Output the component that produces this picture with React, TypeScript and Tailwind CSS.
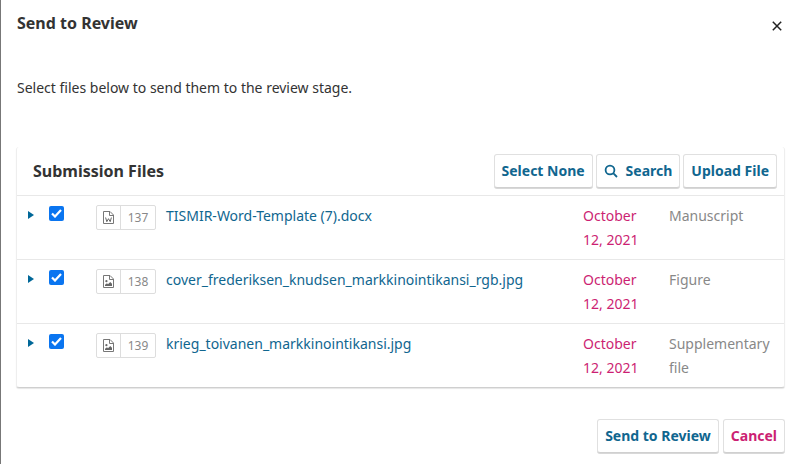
const files = [
  { id: 137, name: 'TISMIR-Word-Template (7).docx', type: ['Manuscript'], icon: 'word' },
  { id: 138, name: 'cover_frederiksen_knudsen_markkinointikansi_rgb.jpg', type: ['Figure'], icon: 'image' },
  { id: 139, name: 'krieg_toivanen_markkinointikansi.jpg', type: ['Supplementary', 'file'], icon: 'image' },
];

function FileIcon({ kind }: { kind: string }) {
  return (
    <svg width="11" height="13" viewBox="0 0 11 13" fill="none" className="block">
      <path d="M.5 .5h6.5l3.5 3.5v8.5H.5z" stroke="#777" fill="#fff" />
      <path d="M6.5 .5v4h4" stroke="#777" />
      {kind === 'word' ? (
        <path d="M2.6 6.5l1.2 4.2 1.7-3 1.7 3 1.2-4.2" stroke="#666" strokeWidth="1" />
      ) : (
        <>
          <circle cx="3.4" cy="6.2" r="1.1" fill="#666" />
          <path d="M2 11V9.8l2-1.6 1 1 2.2-2.2L9 8.8V11z" fill="#666" />
        </>
      )}
    </svg>
  );
}

function Btn({ children, danger, className = '' }: { children: React.ReactNode; danger?: boolean; className?: string }) {
  return (
    <button
      className={`h-[34px] px-[7px] pb-[2px] flex items-center justify-center bg-white border border-[#e0e0e0] border-b-[#d0d0d0] rounded-[3px] shadow-[0_1px_0_#d8d8d8] text-[14px] font-bold whitespace-nowrap ${danger ? 'text-[#cc1f73]' : 'text-[#10668f]'} ${className}`}
    >
      {children}
    </button>
  );
}

export default function App() {
  return (
    <div className="relative w-[797px] h-[464px] overflow-hidden bg-white text-[14px] text-[#333] font-['Noto_Sans',sans-serif] border-l border-[#777]">
      <div className="absolute left-0 top-0 w-px h-[31px] -ml-px bg-[#1c2b3a]" />
      <div className="flex items-start justify-between pl-4 pr-[15px] pt-[11px]">
        <h1 className="text-[16px] leading-6 font-bold">Send to Review</h1>
        <svg width="10" height="10" viewBox="0 0 10 10" className="mt-[10px]" stroke="#222" strokeWidth="1.5">
          <path d="M.8 .8l8.4 8.4M9.2 .8L.8 9.2" />
        </svg>
      </div>
      <p className="pl-4 mt-[43px] leading-5">Select files below to send them to the review stage.</p>

      <div className="ml-[15px] mt-[49px] w-[769px] bg-white border-x border-[#eeeeee] border-b border-b-[#cfcfcf] rounded-[3px] shadow-[0_1px_1px_rgba(0,0,0,0.1)]">
        <div className="h-[49px] flex items-center justify-between pl-[16px] pr-[7px] border-b border-[#e8e8e8]">
          <h2 className="text-[16px] font-bold">Submission Files</h2>
          <div className="flex gap-[3px]">
            <Btn className="w-[99px]">Select None</Btn>
            <Btn>
              <svg width="14" height="14" viewBox="0 0 14 14" fill="none" stroke="#10668f" strokeWidth="1.8" className="mr-[8px] mt-[2px]">
                <circle cx="6" cy="6" r="4.4" />
                <path d="M9.2 9.2l3.8 3.8" />
              </svg>
              Search
            </Btn>
            <Btn>Upload File</Btn>
          </div>
        </div>
        {files.map((f, i) => (
          <div
            key={f.id}
            className={`flex items-start ${i < files.length - 1 ? 'h-[64px] border-b border-[#e8e8e8]' : 'h-[63px]'}`}
          >
            <svg width="6" height="8" viewBox="0 0 6 8" className="ml-[11px] mt-[15px] shrink-0">
              <path d="M0 0l6 4-6 4z" fill="#006798" />
            </svg>
            <div className="ml-[15px] mt-[10px] w-[15px] h-[15px] shrink-0 rounded-[2px] bg-[#0a75f0] flex items-center justify-center">
              <svg width="11" height="9" viewBox="0 0 11 9" fill="none" stroke="#fff" strokeWidth="2.2">
                <path d="M1 4.5l3 3 6-6.5" />
              </svg>
            </div>
            <div className="ml-[32px] mt-[9px] w-[60px] h-[25px] shrink-0 flex items-center border border-[#ddd] rounded-[2px] text-[12px] text-[#888]">
              <div className="w-[24px] h-full flex items-center justify-center border-r border-[#ddd]">
                <FileIcon kind={f.icon} />
              </div>
              <span className="flex-1 text-center">{f.id}</span>
            </div>
            <a className="ml-[10px] mt-[10px] w-[417px] leading-5 text-[#10668f] shrink-0">{f.name}</a>
            <div className="mt-[8px] w-[86px] leading-6 text-[#cc1f73] shrink-0">
              October
              <br />
              12, 2021
            </div>
            <div className="mt-[8px] leading-6 text-[#888]">
              {f.type.map((t) => (
                <div key={t}>{t}</div>
              ))}
            </div>
          </div>
        ))}
      </div>

      <div className="flex justify-end gap-[4px] pr-[12px] mt-[31px]">
        <Btn>Send to Review</Btn>
        <Btn danger>Cancel</Btn>
      </div>
    </div>
  );
}
